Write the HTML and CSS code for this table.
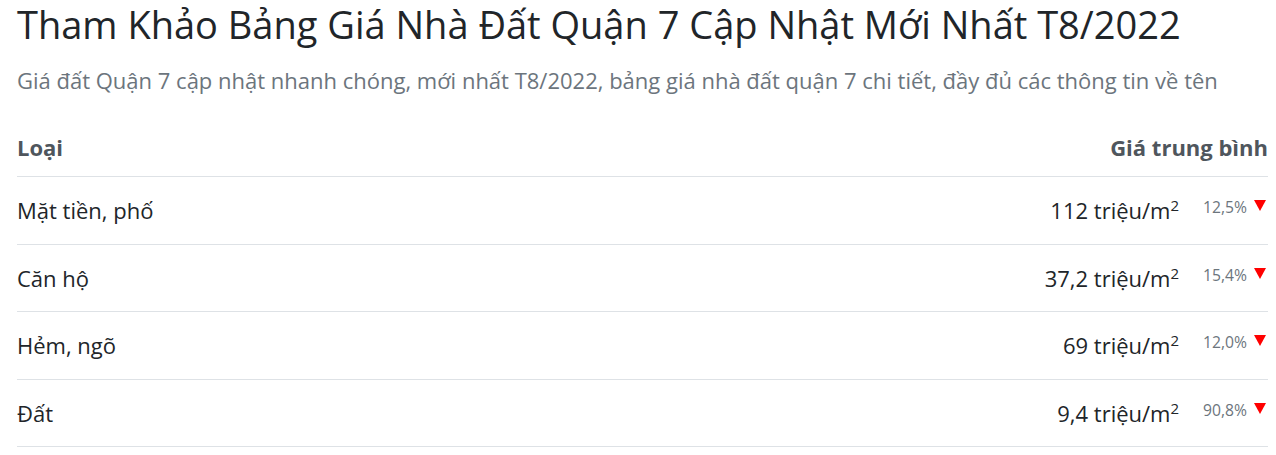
FILE: index.html
```html
<!DOCTYPE html>
<html lang="vi">

<head>
	<meta charset="UTF-8">
	<meta name="viewport" content="width=device-width, initial-scale=1.0">
	<title>Bảng giá nhà đất Quận 7</title>
	<link rel="stylesheet" href="styles.css">
</head>

<body>
	<div class="container">
		<h1 class="title">Tham Khảo Bảng Giá Nhà Đất Quận 7 Cập Nhật Mới Nhất T8/2022</h1>
		<p class="lead">Giá đất Quận 7 cập nhật nhanh chóng, mới nhất T8/2022, bảng giá nhà đất quận 7 chi tiết, đầy đủ các thông tin về tên</p>
		<table class="price-table">
			<thead>
				<tr>
					<th>Loại</th>
					<th class="right">Giá trung bình</th>
				</tr>
			</thead>
			<tbody>
				<tr>
					<td>Mặt tiền, phố</td>
					<td class="right"><span class="price">112 triệu/m<sup>2</sup></span><span class="change">12,5%</span><span class="down"></span></td>
				</tr>
				<tr>
					<td>Căn hộ</td>
					<td class="right"><span class="price">37,2 triệu/m<sup>2</sup></span><span class="change">15,4%</span><span class="down"></span></td>
				</tr>
				<tr>
					<td>Hẻm, ngõ</td>
					<td class="right"><span class="price">69 triệu/m<sup>2</sup></span><span class="change">12,0%</span><span class="down"></span></td>
				</tr>
				<tr>
					<td>Đất</td>
					<td class="right"><span class="price">9,4 triệu/m<sup>2</sup></span><span class="change">90,8%</span><span class="down"></span></td>
				</tr>
			</tbody>
		</table>
	</div>
</body>

</html>
```

FILE: styles.css
```css
body {
	margin: 0;
	font-family: "Open Sans", "Noto Sans", sans-serif;
	color: #212529;
	background-color: white;
}

.container {
	padding: 0 8px 0 17px;
}

.title {
	font-size: 38px;
	font-weight: 400;
	line-height: 46px;
	margin: 1px 0 18px;
	color: #212529;
	white-space: nowrap;
}

.lead {
	font-size: 22px;
	line-height: 30px;
	color: #6c757d;
	margin: 0 0 22px;
	white-space: nowrap;
}

.price-table {
	width: 100%;
	border-collapse: collapse;
	font-size: 22px;
	line-height: 30px;
}

.price-table th {
	text-align: left;
	font-weight: 700;
	color: #4f565d;
	padding: 15px 0 14px;
	border-bottom: 1px solid #dee2e6;
}

.price-table td {
	padding: 18px 0 18.5px;
	border-bottom: 1px solid #dee2e6;
}

.price-table .right {
	text-align: right;
}

.price sup {
	font-size: 15px;
	line-height: 0;
}

.change {
	display: inline-block;
	font-size: 15.7px;
	line-height: 18px;
	color: #6c757d;
	margin-left: 24px;
	vertical-align: 6px;
}

.down {
	display: inline-block;
	width: 0;
	height: 0;
	border-left: 6px solid transparent;
	border-right: 6px solid transparent;
	border-top: 11px solid #f00;
	margin: 0 2px 0 7px;
	vertical-align: 8px;
}
```
